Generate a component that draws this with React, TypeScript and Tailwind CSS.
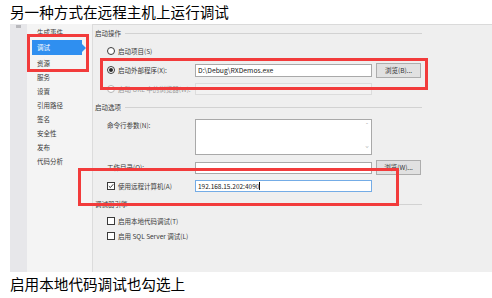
const Radio = ({ checked, disabled }: { checked?: boolean; disabled?: boolean }) => (
  <span
    className={`w-[8px] h-[8px] rounded-full border bg-white flex items-center justify-center shrink-0 ${
      disabled ? 'border-[#b5b5b5]' : 'border-[#3a3a3a]'
    }`}
  >
    {checked && <span className="w-[4px] h-[4px] rounded-full bg-[#2a2a2a]" />}
  </span>
)

const Check = ({ checked }: { checked?: boolean }) => (
  <span className="w-[8px] h-[8px] border border-[#3a3a3a] bg-white flex items-center justify-center shrink-0">
    {checked && (
      <svg width="6" height="6" viewBox="0 0 6 6">
        <path d="M0.8 3.1 L2.4 4.6 L5.3 1.2" fill="none" stroke="#222" strokeWidth="0.9" />
      </svg>
    )}
  </span>
)

const Header = ({ label, className }: { label: string; className: string }) => (
  <div className={`flex items-center h-[14px] w-[327px] gap-[4px] ${className}`}>
    <span>{label}</span>
    <span className="flex-1 h-px bg-[#d2d2d2]" />
  </div>
)

const BrowseButton = ({ label }: { label: string }) => (
  <div className="ml-[4px] w-[45px] h-[15px] bg-[#e1e1e1] border border-[#adadad] flex items-center justify-center text-[#333]">
    {label}
  </div>
)

const navItems = ['资源', '服务', '设置', '引用路径', '签名', '安全性', '发布', '代码分析']

export default function App() {
  return (
    <div
      className="w-[492px] h-[298px] bg-white text-black overflow-hidden flex flex-col relative"
      style={{ fontFamily: '"Noto Sans CJK SC", "Liberation Sans", sans-serif' }}
    >
      <div className="h-[24px] pl-[10px] flex items-center text-[14.6px] leading-none">另一种方式在远程主机上运行调试</div>

      {/* Embedded project properties screenshot */}
      <div className="ml-[10px] h-[248px] flex bg-[#efefef] text-[6.5px] leading-none text-[#3a3a3a]">
        <div className="w-[17px] bg-[#e7e7ea] flex justify-center pt-[1px]">
          <span className="w-[5px] h-[3px] bg-[#b8b8bc]" />
        </div>

        {/* Nav column */}
        <div className="w-[66px] bg-[#f4f4f4] border-r border-[#dcdcdc] flex flex-col">
          <div className="h-[16px] pl-[10px] flex items-center">生成事件</div>
          <div className="h-[15px] ml-[5px] w-[50px] bg-[#2f8ff0] text-white pl-[5px] flex items-center relative">
            调试
            <span className="absolute right-[-4px] top-[3.5px] w-0 h-0 border-y-[4px] border-y-transparent border-l-[4px] border-l-[#2f8ff0]" />
          </div>
          <div className="mt-[1px] flex flex-col">
            {navItems.map((n) => (
              <div key={n} className="h-[14px] pl-[10px] flex items-center">
                {n}
              </div>
            ))}
          </div>
        </div>

        {/* Content */}
        <div className="flex-1 border-t border-[#dadada] pl-[2px] flex flex-col">
          <Header label="启动操作" className="mt-[1px]" />

          <div className="mt-[4px] h-[14px] ml-[12px] flex items-center gap-[3px]">
            <Radio />
            <span>启动项目(S)</span>
          </div>

          <div className="mt-[4px] h-[16px] ml-[12px] flex items-center">
            <div className="w-[88px] flex items-center gap-[3px]">
              <Radio checked />
              <span>启动外部程序(X):</span>
            </div>
            <div className="w-[177px] h-[13px] bg-white border border-[#a9a9a9] flex items-center pl-[2px] text-[6.8px] text-[#222]">
              {'D:\\Debug\\RXDemos.exe'}
            </div>
            <BrowseButton label="浏览(B)..." />
          </div>

          <div className="mt-[4px] h-[14px] ml-[12px] flex items-center">
            <div className="w-[88px] flex items-center gap-[3px] text-[#9a9a9a]">
              <Radio disabled />
              <span>启动 URL 中的浏览器(W):</span>
            </div>
            <div className="w-[177px] h-[12px] bg-[#f2f2f2] border border-[#dcdcdc]" />
          </div>

          <Header label="启动选项" className="mt-[4px]" />

          <div className="mt-[5px] h-[36px] ml-[12px] flex items-start">
            <div className="w-[88px] pt-[3px]">命令行参数(N):</div>
            <div className="w-[177px] h-[36px] bg-white border border-[#a9a9a9] flex justify-end">
              <div className="w-[8px] flex flex-col items-center justify-between py-[2px] text-[#b0b0b0] text-[6px]">
                <span>ˆ</span>
                <span>ˇ</span>
              </div>
            </div>
          </div>

          <div className="mt-[5px] h-[15px] ml-[12px] flex items-center">
            <div className="w-[88px]">工作目录(O):</div>
            <div className="w-[177px] h-[12px] bg-white border border-[#a9a9a9]" />
            <BrowseButton label="浏览(W)..." />
          </div>

          <div className="mt-[4px] h-[14px] ml-[12px] flex items-center">
            <div className="w-[88px] flex items-center gap-[3px]">
              <Check checked />
              <span>使用远程计算机(A)</span>
            </div>
            <div className="w-[177px] h-[12px] bg-white border border-[#74ace6] flex items-center pl-[2px] text-[6.5px] text-[#222]">
              192.168.15.202:4090
              <span className="w-px h-[8px] bg-[#111]" />
            </div>
          </div>

          <Header label="调试器引擎" className="mt-[4px]" />

          <div className="mt-[3px] h-[14px] ml-[12px] flex items-center gap-[3px]">
            <Check />
            <span>启用本地代码调试(T)</span>
          </div>
          <div className="mt-[1px] h-[14px] ml-[12px] flex items-center gap-[3px]">
            <Check />
            <span>启用 SQL Server 调试(L)</span>
          </div>
        </div>
      </div>

      <div className="h-[24px] pl-[10px] flex items-center text-[14.6px] leading-none">启用本地代码调试也勾选上</div>

      {/* Red annotation boxes */}
      <div className="absolute left-[27px] top-[34px] w-[62px] h-[38px] border-[3px] border-[#f23b3b]" />
      <div className="absolute left-[100px] top-[58px] w-[328px] h-[32px] border-[3px] border-[#f23b3b]" />
      <div className="absolute left-[78px] top-[168px] w-[321px] h-[38px] border-[3px] border-[#f23b3b]" />
    </div>
  )
}
